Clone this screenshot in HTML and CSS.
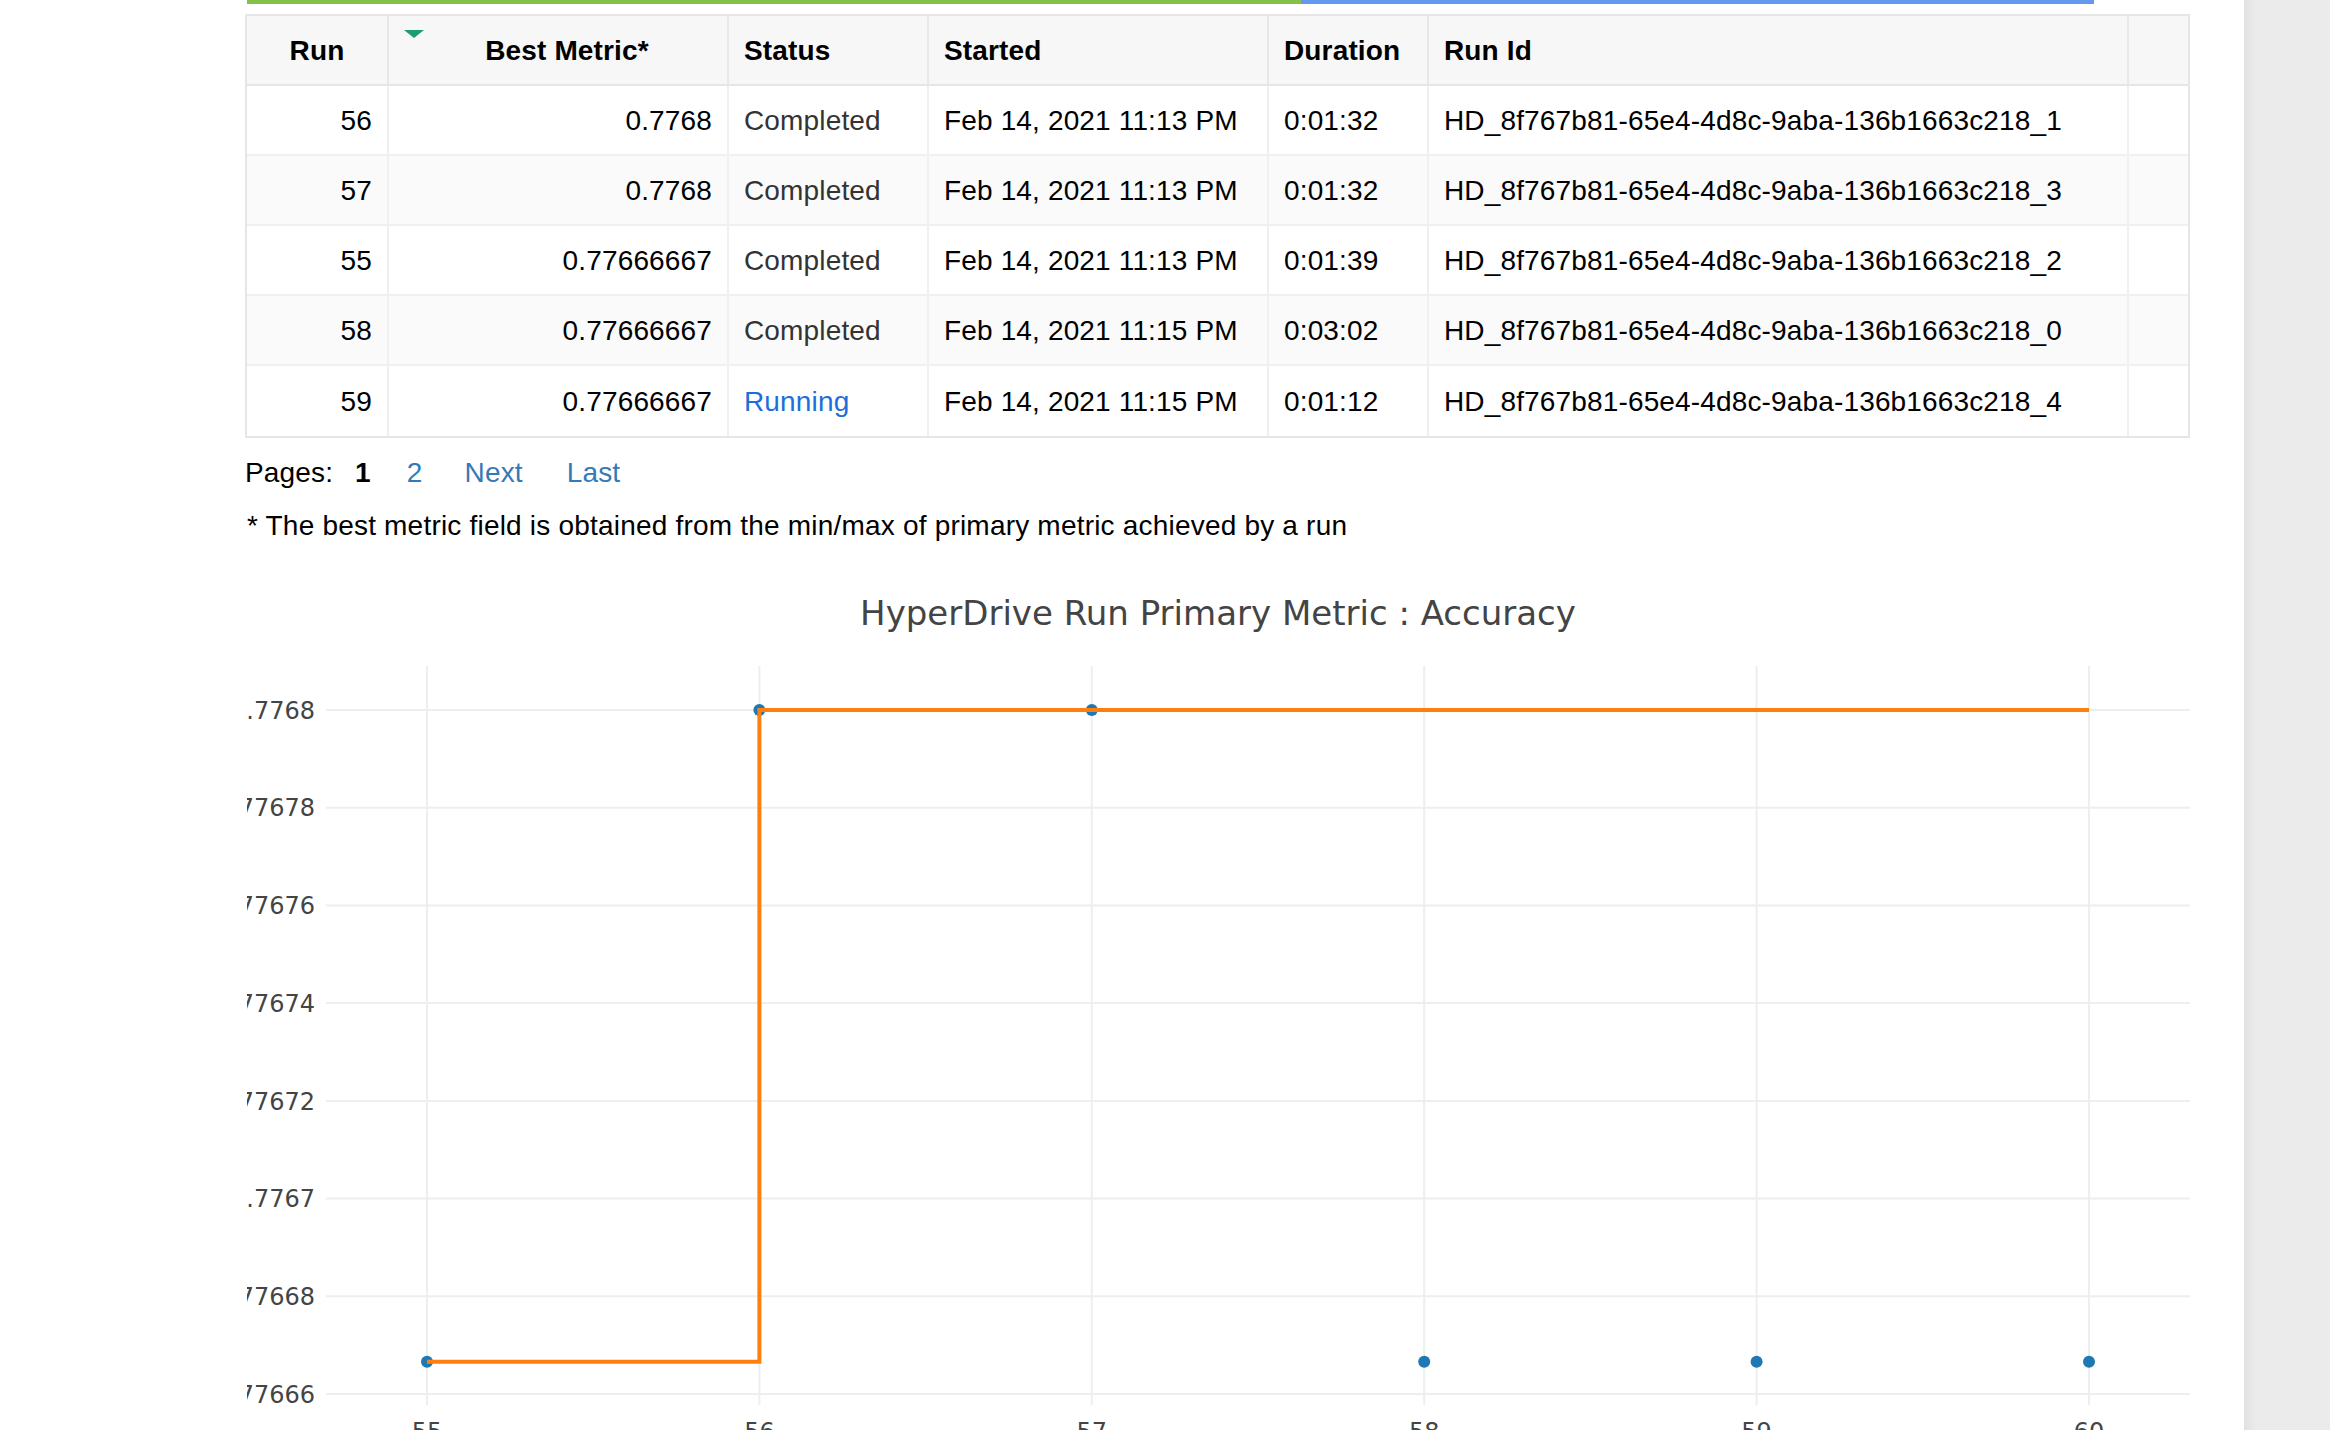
FILE: index.html
```html
<!DOCTYPE html>
<html lang="en">
<head>
<meta charset="utf-8">
<title>HyperDrive Runs</title>
<link rel="stylesheet" href="styles.css">
</head>
<body>
<div class="page">
  <div class="main">
    <div class="progress">
      <div class="progress-done"></div>
      <div class="progress-running"></div>
    </div>

    <table class="runs">
      <thead>
        <tr>
          <th class="c-run center">Run</th>
          <th class="c-metric center metric-head"><span class="sort-down"></span>Best Metric*</th>
          <th class="c-status">Status</th>
          <th class="c-started">Started</th>
          <th class="c-duration">Duration</th>
          <th class="c-id">Run Id</th>
          <th class="c-extra"></th>
        </tr>
      </thead>
      <tbody>
        <tr>
          <td class="num">56</td><td class="num">0.7768</td><td class="status">Completed</td>
          <td>Feb 14, 2021 11:13 PM</td><td>0:01:32</td><td>HD_8f767b81-65e4-4d8c-9aba-136b1663c218_1</td><td></td>
        </tr>
        <tr class="alt">
          <td class="num">57</td><td class="num">0.7768</td><td class="status">Completed</td>
          <td>Feb 14, 2021 11:13 PM</td><td>0:01:32</td><td>HD_8f767b81-65e4-4d8c-9aba-136b1663c218_3</td><td></td>
        </tr>
        <tr>
          <td class="num">55</td><td class="num">0.77666667</td><td class="status">Completed</td>
          <td>Feb 14, 2021 11:13 PM</td><td>0:01:39</td><td>HD_8f767b81-65e4-4d8c-9aba-136b1663c218_2</td><td></td>
        </tr>
        <tr class="alt">
          <td class="num">58</td><td class="num">0.77666667</td><td class="status">Completed</td>
          <td>Feb 14, 2021 11:15 PM</td><td>0:03:02</td><td>HD_8f767b81-65e4-4d8c-9aba-136b1663c218_0</td><td></td>
        </tr>
        <tr>
          <td class="num">59</td><td class="num">0.77666667</td><td class="status running">Running</td>
          <td>Feb 14, 2021 11:15 PM</td><td>0:01:12</td><td>HD_8f767b81-65e4-4d8c-9aba-136b1663c218_4</td><td></td>
        </tr>
      </tbody>
    </table>

    <div class="pager">
      <span>Pages:</span>
      <span class="pg-cur">1</span>
      <a class="pg-link pg-2" href="#">2</a>
      <a class="pg-link" href="#">Next</a>
      <a class="pg-link pg-last" href="#">Last</a>
    </div>

    <p class="footnote">* The best metric field is obtained from the min/max of primary metric achieved by a run</p>

    <svg class="chart" width="1943" height="900" viewBox="0 0 1943 900" xmlns="http://www.w3.org/2000/svg">
      <text class="chart-title" x="971" y="65" text-anchor="middle">HyperDrive Run Primary Metric : Accuracy</text>

      <g class="grid">
        <line x1="180" y1="106" x2="180" y2="845"/>
        <line x1="512.4" y1="106" x2="512.4" y2="845"/>
        <line x1="844.8" y1="106" x2="844.8" y2="845"/>
        <line x1="1177.2" y1="106" x2="1177.2" y2="845"/>
        <line x1="1509.6" y1="106" x2="1509.6" y2="845"/>
        <line x1="1842" y1="106" x2="1842" y2="845"/>
        <line x1="79" y1="150" x2="1943" y2="150"/>
        <line x1="79" y1="247.7" x2="1943" y2="247.7"/>
        <line x1="79" y1="345.4" x2="1943" y2="345.4"/>
        <line x1="79" y1="443.1" x2="1943" y2="443.1"/>
        <line x1="79" y1="540.9" x2="1943" y2="540.9"/>
        <line x1="79" y1="638.6" x2="1943" y2="638.6"/>
        <line x1="79" y1="736.3" x2="1943" y2="736.3"/>
        <line x1="79" y1="834" x2="1943" y2="834"/>
      </g>

      <g class="ytick" text-anchor="end">
        <text x="68" y="158.7">0.7768</text>
        <text x="68" y="256.4">0.77678</text>
        <text x="68" y="354.1">0.77676</text>
        <text x="68" y="451.8">0.77674</text>
        <text x="68" y="549.6">0.77672</text>
        <text x="68" y="647.3">0.7767</text>
        <text x="68" y="745">0.77668</text>
        <text x="68" y="842.7">0.77666</text>
      </g>

      <g class="xtick" text-anchor="middle">
        <text x="180" y="879.5">55</text>
        <text x="512.4" y="879.5">56</text>
        <text x="844.8" y="879.5">57</text>
        <text x="1177.2" y="879.5">58</text>
        <text x="1509.6" y="879.5">59</text>
        <text x="1842" y="879.5">60</text>
      </g>

      <g class="points">
        <circle cx="180" cy="801.7" r="6"/>
        <circle cx="512.4" cy="150" r="6"/>
        <circle cx="844.8" cy="150" r="6"/>
        <circle cx="1177.2" cy="801.7" r="6"/>
        <circle cx="1509.6" cy="801.7" r="6"/>
        <circle cx="1842" cy="801.7" r="6"/>
      </g>

      <path class="best-line" d="M180 801.7 H512.4 V150 H1842"/>
    </svg>
  </div>
  <div class="side"></div>
</div>
</body>
</html>
```

FILE: styles.css
```css
html, body {
  margin: 0;
  padding: 0;
  background: #ffffff;
  overflow: hidden;
}

body {
  font-family: "Liberation Sans", Arial, Helvetica, sans-serif;
  color: #000;
}

.page {
  display: flex;
  height: 1430px;
}

.main {
  flex: 0 0 2244px;
  box-sizing: border-box;
  padding-left: 245px;
  background: #fff;
}

.side {
  flex: 1;
  background: linear-gradient(to right, #e1e1e1, #ebebeb 12px, #ebebeb);
}

/* progress bar */
.progress {
  display: flex;
  height: 4px;
  margin-left: 2px;
}
.progress-done {
  width: 1054px;
  background: #84c04a;
}
.progress-running {
  width: 793px;
  background: #6299ee;
}

/* table */
.runs {
  margin-top: 10px;
  border-collapse: separate;
  border-spacing: 0;
  border: 2px solid #e6e6e6;
  table-layout: fixed;
  width: 1945px;
  font-size: 28px;
  letter-spacing: 0.15px;
}

.runs th,
.runs td {
  box-sizing: border-box;
  height: 70px;
  padding: 0 15px;
  border-right: 2px solid #f0f0f0;
  border-bottom: 2px solid #f0f0f0;
  white-space: nowrap;
  overflow: hidden;
  vertical-align: middle;
}

.runs th:last-child,
.runs td:last-child {
  border-right: none;
}

.runs tbody tr:last-child td {
  border-bottom: none;
}

.runs thead th {
  background: #f7f7f7;
  font-weight: bold;
  text-align: left;
  padding-top: 2px;
  border-right-color: #e8e8e8;
  border-bottom-color: #e6e6e6;
}

.runs thead th.center {
  text-align: center;
}

.runs .metric-head {
  position: relative;
  padding-left: 33px;
}

.sort-down {
  position: absolute;
  left: 15px;
  top: 14px;
  width: 0;
  height: 0;
  border-left: 10px solid transparent;
  border-right: 10px solid transparent;
  border-top: 8px solid #1f9c6d;
}

.c-run { width: 142px; }
.c-metric { width: 340px; }
.c-status { width: 200px; }
.c-started { width: 340px; }
.c-duration { width: 160px; }
.c-id { width: 700px; }
.c-extra { width: 59px; }

.runs tbody tr { background: #fff; }
.runs tbody tr.alt { background: #fafafa; }

.runs td { padding-top: 2px; }
.runs td.num { text-align: right; }
.runs td.status { color: #333; }
.runs td.running { color: #1c6fd9; }

/* pager */
.pager {
  margin-top: 15px;
  font-size: 28px;
  line-height: 40px;
  display: flex;
  align-items: baseline;
  letter-spacing: 0.15px;
}
.pg-cur {
  margin-left: 22px;
  font-weight: bold;
}
.pg-link {
  color: #337ab7;
  text-decoration: none;
  margin-left: 42px;
}
.pg-2 { margin-left: 36px; }
.pg-last { margin-left: 44px; }

.footnote {
  margin: 13px 0 0 2px;
  font-size: 28px;
  line-height: 40px;
  letter-spacing: 0.2px;
}

/* chart */
.chart {
  display: block;
  margin: 14px 0 0 2px;
  font-family: "DejaVu Sans", Verdana, sans-serif;
}
.chart-title {
  font-size: 34px;
  fill: #444;
}
.grid line {
  stroke: #eeeeee;
  stroke-width: 2;
}
.ytick text,
.xtick text {
  font-size: 24px;
  fill: #444;
}
.points circle {
  fill: #1f77b4;
}
.best-line {
  fill: none;
  stroke: #ff7f0e;
  stroke-width: 4;
}
```
